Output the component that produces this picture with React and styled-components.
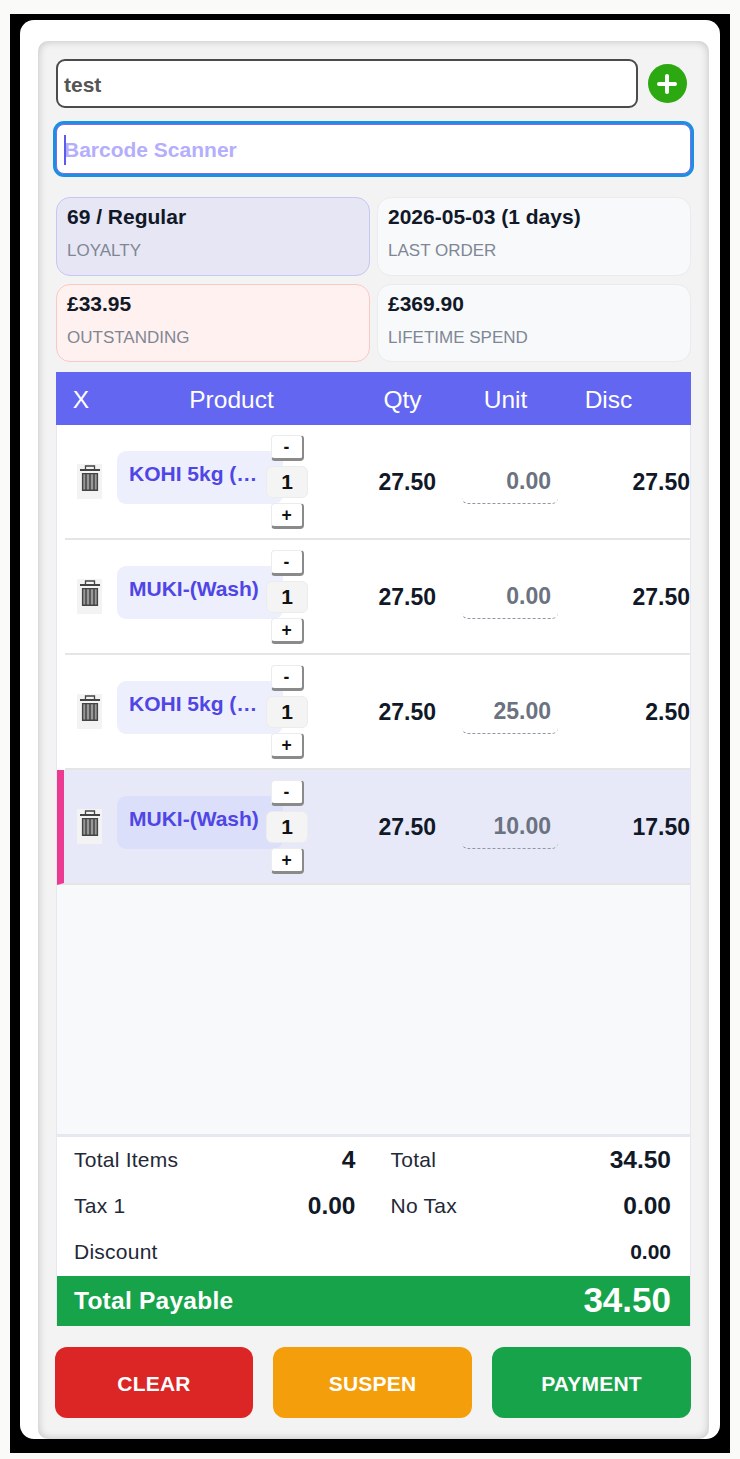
import React from "react";
import styled, { createGlobalStyle } from "styled-components";

const Global = createGlobalStyle`
  html, body { margin: 0; padding: 0; background: #fafaf8; }
  body { font-family: "Liberation Sans", Arial, sans-serif; overflow: hidden; }
  * { box-sizing: border-box; }
`;

const Frame = styled.div`
  margin: 14px 10px 6px;
  height: 1439px;
  padding: 6px 10px 14px;
  background: #000;
`;

const Card = styled.div`
  height: 1419px;
  padding: 21px 11px 0 18px;
  background: #fff;
  border-radius: 14px;
`;

const Panel = styled.div`
  height: 100%;
  display: flex;
  flex-direction: column;
  padding: 18px 18px 21px;
  background: #f3f3f3;
  border-radius: 10px;
  box-shadow: inset 0 0 9px rgba(0, 0, 0, 0.22);
`;

const CustomerRow = styled.div`
  display: flex;
  align-items: center;
  gap: 9.5px;
`;

const CustomerInput = styled.input`
  flex: 1;
  min-width: 0;
  height: 49px;
  padding: 2px 6px 0;
  border: 2px solid #4b4b4b;
  border-radius: 9px;
  background: #fff;
  color: #555;
  font: bold 21px "Liberation Sans", Arial, sans-serif;
  outline: none;
`;

const AddButton = styled.button`
  flex: none;
  width: 39.5px;
  height: 39.5px;
  margin-right: 4px;
  padding: 0;
  display: flex;
  align-items: center;
  justify-content: center;
  border: 0;
  border-radius: 50%;
  background: #2ca911;
`;

const ScanWrap = styled.div`
  position: relative;
  margin: 16px 0 23px;
`;

const ScanInput = styled.input`
  display: block;
  width: 100%;
  height: 50px;
  padding: 2px 7px 0;
  border: 1.5px solid #7c6cf0;
  border-radius: 8px;
  background: #fff;
  box-shadow: 0 0 0 3px #1d8fe0;
  outline: none;
  font: bold 21px "Liberation Sans", Arial, sans-serif;
  &::placeholder { color: #b4aefc; opacity: 1; }
`;

const Caret = styled.span`
  position: absolute;
  left: 8px;
  top: 11px;
  width: 1.5px;
  height: 30px;
  background: #5b5bf0;
`;

const Stats = styled.div`
  display: grid;
  grid-template-columns: 314px 314px;
  grid-template-rows: 79px 78px;
  column-gap: 7px;
  row-gap: 8px;
  margin-bottom: 10px;
`;

const tones = {
  plain: ["#f8f9fb", "#eaebee"],
  loyal: ["#e6e6f5", "#c6c6f7"],
  owed: ["#fff1f0", "#fbc8c6"],
};

const Stat = styled.div`
  padding: 7px 10px;
  border: 1.75px solid ${(p) => tones[p.$tone][1]};
  border-radius: 14px;
  background: ${(p) => tones[p.$tone][0]};
`;

const StatValue = styled.div`
  font-size: 21px;
  line-height: 24px;
  font-weight: bold;
  color: #111827;
`;

const StatLabel = styled.div`
  margin-top: 12px;
  font-size: 17px;
  line-height: 20px;
  color: #7f8794;
`;

const Table = styled.div`
  flex: 1;
  min-height: 0;
  display: flex;
  flex-direction: column;
  border: solid #e6e7f0;
  border-width: 0 1px;
  background: #f8f9fb;
`;

const HeadRow = styled.div`
  height: 53px;
  margin: 0 -1px;
  padding-top: 2px;
  display: grid;
  grid-template-columns: 50px 251px 91px 115px 91px 37px;
  align-items: center;
  background: #6366f1;
  color: #fff;
  font-size: 24.5px;
  text-align: center;
`;

const Rows = styled.div`
  flex: 1;
`;

const Row = styled.div`
  padding-left: ${(p) => (p.$active ? "0" : "8px")};
  background: #fff;
`;

const RowInner = styled.div`
  height: 115px;
  display: flex;
  align-items: center;
  padding-left: ${(p) => (p.$active ? "1px" : "0")};
  border-bottom: 2px solid #e5e5e5;
  border-left: ${(p) => (p.$active ? "7px solid #ec3a91" : "0")};
  background: ${(p) => (p.$active ? "#e7e9f9" : "#fff")};
`;

const TrashButton = styled.div`
  flex: none;
  width: 25px;
  height: 35px;
  margin: 0 15px 0 12px;
  padding-top: 1px;
  display: flex;
  justify-content: center;
  background: #f3f3f3;
`;

const ProductName = styled.div`
  flex: none;
  width: 166px;
  height: 53px;
  margin-bottom: 8px;
  padding: 11px 12px 0;
  border-radius: 9px;
  background: ${(p) => (p.$active ? "#dcdffa" : "#eeeffd")};
  color: #4f46e5;
  font-size: 21px;
  line-height: 24px;
  font-weight: bold;
  white-space: nowrap;
  overflow: hidden;
`;

const Stepper = styled.div`
  flex: none;
  width: 42px;
  margin-left: -17px;
  display: flex;
  flex-direction: column;
  align-items: center;
  gap: 5px;
  position: relative;
`;

const StepButton = styled.button`
  width: 33px;
  height: 26px;
  padding: 0;
  border: 1px solid #ececec;
  border-right: 2px solid #8a8a8a;
  border-bottom: 3px solid #8a8a8a;
  border-radius: 4px;
  background: #fff;
  color: #111;
  font: bold 17.5px/20px "Liberation Sans", Arial, sans-serif;
`;

const QtyBox = styled.div`
  width: 42px;
  height: 32px;
  border: 1px solid #ececec;
  border-radius: 6px;
  background: #f4f4f4;
  color: #111;
  font-size: 21px;
  line-height: 30px;
  font-weight: bold;
  text-align: center;
`;

const Price = styled.div`
  flex: none;
  width: 128px;
  padding-top: 1px;
  text-align: right;
  font-size: 23px;
  font-weight: bold;
  color: #111827;
`;

const UnitInput = styled.div`
  flex: none;
  width: 96px;
  height: 45px;
  margin-left: 26px;
  padding-right: 7px;
  border-bottom: 1px dashed #8f97a3;
  border-radius: 0 0 6px 6px;
  text-align: right;
  font-size: 23px;
  line-height: 44px;
  font-weight: bold;
  color: #6b7280;
`;

const LineTotal = styled(Price)`
  width: 132px;
`;

const Totals = styled.div`
  flex: none;
  display: grid;
  grid-template-columns: 316.5px 316.5px;
  grid-auto-rows: 46px;
  height: 142px;
  border-top: 3px solid #e6e7f0;
  background: #fff;
`;

const TotalCell = styled.div`
  display: flex;
  align-items: center;
  justify-content: space-between;
  padding: 0 ${(p) => (p.$left ? "18px" : "19px")} 0 17px;
  grid-column: ${(p) => (p.$wide ? "1 / -1" : "auto")};
`;

const TotalLabel = styled.span`
  font-size: 21px;
  letter-spacing: 0.25px;
  color: #1f2937;
`;

const TotalValue = styled.span`
  font-size: ${(p) => (p.$small ? "21px" : "24.5px")};
  font-weight: bold;
  color: #111827;
`;

const Payable = styled.div`
  flex: none;
  height: 50px;
  display: flex;
  align-items: center;
  justify-content: space-between;
  padding: 0 19px 0 17px;
  background: #16a34a;
  color: #fff;
  font-weight: bold;
`;

const PayableLabel = styled.span`
  font-size: 24.5px;
  letter-spacing: 0.25px;
`;

const PayableValue = styled.span`
  font-size: 35px;
  padding-bottom: 3px;
`;

const Actions = styled.div`
  flex: none;
  height: 71px;
  margin: 21px 0 0 -1px;
  display: grid;
  grid-template-columns: 198px 199px 199px;
  column-gap: 20px;
`;

const ActionButton = styled.button`
  padding: 2px 0 0;
  border: 0;
  border-radius: 12px;
  background: ${(p) => p.$bg};
  color: #fff;
  font: bold 21px "Liberation Sans", Arial, sans-serif;
  letter-spacing: 0.2px;
`;

const TrashIcon = () => (
  <svg width="20" height="26" viewBox="0 0 20 26" fill="none">
    <path d="M5.5 4.5V1h9v3.5" stroke="#444" strokeWidth="1.3" />
    <path d="M0 4h20v2H0z" fill="#444" />
    <path d="M2.6 8.6h14.8v16.6H2.6z" fill="#999" stroke="#444" strokeWidth="1.4" />
    <path d="M6 9v16M10 9v16M14 9v16" stroke="#444" strokeWidth="1.5" />
  </svg>
);

const items = [
  { name: "KOHI 5kg (…", price: "27.50", disc: "0.00", total: "27.50" },
  { name: "MUKI-(Wash)", price: "27.50", disc: "0.00", total: "27.50" },
  { name: "KOHI 5kg (…", price: "27.50", disc: "25.00", total: "2.50" },
  { name: "MUKI-(Wash)", price: "27.50", disc: "10.00", total: "17.50", active: true },
];

export default function App() {
  return (
    <>
      <Global />
      <Frame>
        <Card>
          <Panel>
            <CustomerRow>
              <CustomerInput defaultValue="test" />
              <AddButton aria-label="Add customer">
                <svg width="20" height="20" viewBox="0 0 20 20">
                  <path d="M10 2v16M2 10h16" stroke="#fff" strokeWidth="4" strokeLinecap="round" />
                </svg>
              </AddButton>
            </CustomerRow>
            <ScanWrap>
              <ScanInput placeholder="Barcode Scanner" />
              <Caret />
            </ScanWrap>
            <Stats>
              <Stat $tone="loyal">
                <StatValue>69 / Regular</StatValue>
                <StatLabel>LOYALTY</StatLabel>
              </Stat>
              <Stat $tone="plain">
                <StatValue>2026-05-03 (1 days)</StatValue>
                <StatLabel>LAST ORDER</StatLabel>
              </Stat>
              <Stat $tone="owed">
                <StatValue>£33.95</StatValue>
                <StatLabel>OUTSTANDING</StatLabel>
              </Stat>
              <Stat $tone="plain">
                <StatValue>£369.90</StatValue>
                <StatLabel>LIFETIME SPEND</StatLabel>
              </Stat>
            </Stats>
            <Table>
              <HeadRow>
                <div>X</div>
                <div>Product</div>
                <div>Qty</div>
                <div>Unit</div>
                <div>Disc</div>
                <div />
              </HeadRow>
              <Rows>
                {items.map((item, i) => (
                  <Row key={i} $active={item.active}>
                    <RowInner $active={item.active}>
                      <TrashButton>
                        <TrashIcon />
                      </TrashButton>
                      <ProductName $active={item.active}>{item.name}</ProductName>
                      <Stepper>
                        <StepButton>-</StepButton>
                        <QtyBox>1</QtyBox>
                        <StepButton>+</StepButton>
                      </Stepper>
                      <Price>{item.price}</Price>
                      <UnitInput>{item.disc}</UnitInput>
                      <LineTotal>{item.total}</LineTotal>
                    </RowInner>
                  </Row>
                ))}
              </Rows>
              <Totals>
                <TotalCell $left>
                  <TotalLabel>Total Items</TotalLabel>
                  <TotalValue>4</TotalValue>
                </TotalCell>
                <TotalCell>
                  <TotalLabel>Total</TotalLabel>
                  <TotalValue>34.50</TotalValue>
                </TotalCell>
                <TotalCell $left>
                  <TotalLabel>Tax 1</TotalLabel>
                  <TotalValue>0.00</TotalValue>
                </TotalCell>
                <TotalCell>
                  <TotalLabel>No Tax</TotalLabel>
                  <TotalValue>0.00</TotalValue>
                </TotalCell>
                <TotalCell $wide>
                  <TotalLabel>Discount</TotalLabel>
                  <TotalValue $small>0.00</TotalValue>
                </TotalCell>
              </Totals>
              <Payable>
                <PayableLabel>Total Payable</PayableLabel>
                <PayableValue>34.50</PayableValue>
              </Payable>
            </Table>
            <Actions>
              <ActionButton $bg="#dc2626">CLEAR</ActionButton>
              <ActionButton $bg="#f59e0b">SUSPEN</ActionButton>
              <ActionButton $bg="#16a34a">PAYMENT</ActionButton>
            </Actions>
          </Panel>
        </Card>
      </Frame>
    </>
  );
}
